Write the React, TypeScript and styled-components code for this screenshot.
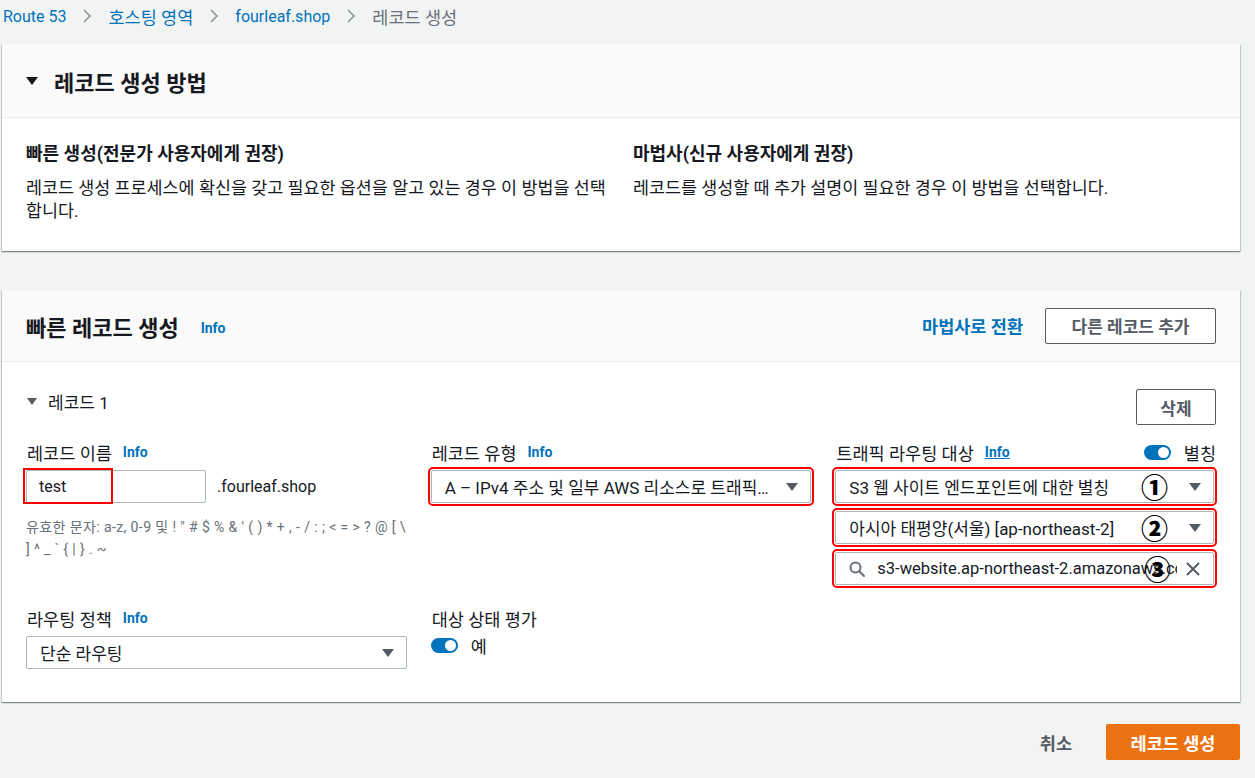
import styled, { createGlobalStyle } from "styled-components";

const GlobalStyle = createGlobalStyle`
  * { box-sizing: border-box; }
  html, body { margin: 0; padding: 0; }
  body {
    background: #f2f3f3;
    font-family: Roboto, "Noto Sans CJK KR", sans-serif;
    color: #16191f;
    font-size: 17px;
  }
`;

const Page = styled.div`
  width: 1255px;
  height: 778px;
  overflow: hidden;
  padding: 0 15px 0 2px;
`;

const Breadcrumbs = styled.nav`
  display: flex;
  align-items: center;
  height: 28px;
  padding-top: 4px;
  margin-bottom: 16px;
  margin-left: 1px;
`;

const Crumb = styled.span<{ $current?: boolean; $latin?: boolean }>`
  font-size: ${({ $latin }) => ($latin ? "16px" : "17.5px")};
  color: ${({ $current }) => ($current ? "#687078" : "#0073bb")};
`;

const CrumbSep = styled.span`
  display: flex;
  align-items: center;
  margin: 0 16px;
`;

const Panel = styled.section`
  background: #ffffff;
  box-shadow: 0 1px 1px 0 rgba(0, 28, 36, 0.3), 1px 1px 1px 0 rgba(0, 28, 36, 0.15),
    -1px 1px 1px 0 rgba(0, 28, 36, 0.15);
  margin-bottom: 39px;
`;

const PanelHeader = styled.header<{ $height: number }>`
  display: flex;
  align-items: center;
  justify-content: space-between;
  height: ${({ $height }) => $height}px;
  padding: 0 24px;
  background: #fafafa;
  border-bottom: 1px solid #eaeded;
`;

const HeaderTitle = styled.h2`
  display: flex;
  align-items: center;
  margin: 0;
  font-size: 22px;
  font-weight: 700;
  color: #16191f;
`;

const Caret = styled.span<{ $size: number; $color?: string }>`
  display: inline-block;
  flex: none;
  width: 0;
  height: 0;
  border-left: ${({ $size }) => $size / 2}px solid transparent;
  border-right: ${({ $size }) => $size / 2}px solid transparent;
  border-top: ${({ $size }) => $size * 0.7}px solid ${({ $color }) => $color || "#16191f"};
`;

const TitleCaret = styled(Caret)`
  margin-right: 16px;
`;

const InfoLink = styled.a<{ $underline?: boolean }>`
  font-family: Roboto, sans-serif;
  font-size: 14px;
  font-weight: 700;
  color: #0073bb;
  margin-left: 11px;
  text-decoration: ${({ $underline }) => ($underline ? "underline" : "none")};
`;

const HeaderInfo = styled(InfoLink)`
  margin-left: 22px;
  margin-top: 5px;
`;

const MethodBody = styled.div`
  display: grid;
  grid-template-columns: minmax(0, 1fr) minmax(0, 1fr);
  column-gap: 24px;
  padding: 26px 24px 28px;
`;

const MethodTitle = styled.div`
  font-size: 18px;
  font-weight: 700;
  line-height: 20px;
`;

const MethodDesc = styled.div`
  margin-top: 13px;
  font-size: 17.4px;
  line-height: 23px;
  color: #16191f;
`;

const HeaderActions = styled.div`
  display: flex;
  align-items: center;
  gap: 22px;
`;

const LinkAction = styled.a`
  font-size: 17.5px;
  font-weight: 700;
  color: #0073bb;
`;

const NormalButton = styled.button<{ $width: number }>`
  height: 36px;
  width: ${({ $width }) => $width}px;
  border: 1px solid #545b64;
  border-radius: 2px;
  background: #ffffff;
  color: #545b64;
  font-family: inherit;
  font-size: 17px;
  font-weight: 700;
`;

const RecordBody = styled.div`
  padding: 27px 24px 33px;
`;

const RecordHead = styled.div`
  display: flex;
  align-items: center;
  justify-content: space-between;
  height: 36px;
`;

const RecordTitle = styled.div`
  display: flex;
  align-items: center;
  gap: 11px;
  margin-top: -12px;
  font-size: 17px;
  color: #16191f;
  padding-left: 1px;
`;

const Fields = styled.div`
  display: grid;
  grid-template-columns: repeat(3, minmax(0, 1fr));
  column-gap: 24px;
  row-gap: 23px;
  margin-top: 17px;
`;

const Field = styled.div`
  display: flex;
  flex-direction: column;
  min-width: 0;
`;

const LabelRow = styled.div`
  display: flex;
  align-items: center;
  justify-content: space-between;
  height: 20px;
  margin-bottom: 8px;
`;

const Label = styled.label`
  display: flex;
  align-items: center;
  font-size: 17.5px;
  color: #16191f;
  padding-left: 1px;
`;

const ToggleWrap = styled.div<{ $lift?: number }>`
  display: flex;
  align-items: center;
  gap: 13px;
  font-size: 17.5px;
  margin-top: ${({ $lift }) => ($lift ? -$lift : 0)}px;
`;

const Toggle = styled.span`
  position: relative;
  display: inline-block;
  width: 27px;
  height: 15px;
  border-radius: 8px;
  background: #0073bb;

  &::after {
    content: "";
    position: absolute;
    top: 2px;
    right: 2px;
    width: 11px;
    height: 11px;
    border-radius: 50%;
    background: #ffffff;
  }
`;

const NameRow = styled.div`
  display: flex;
  align-items: center;
  gap: 11px;
`;

const Annotated = styled.div`
  position: relative;
`;

const TextInput = styled.div<{ $width?: number }>`
  display: flex;
  align-items: center;
  height: 33px;
  width: ${({ $width }) => ($width ? `${$width}px` : "100%")};
  padding: 0 12px;
  border: 1px solid #aab7b8;
  border-radius: 2px;
  background: #ffffff;
  font-size: 16px;
  color: #16191f;
`;

const Suffix = styled.span`
  font-size: 16px;
  color: #16191f;
`;

const RedBox = styled.span`
  position: absolute;
  left: -3px;
  top: -2px;
  width: 90px;
  height: 36px;
  border: 2px solid #ff0000;
  pointer-events: none;
`;

const Hint = styled.div`
  margin-top: 13px;
  font-size: 14px;
  letter-spacing: 0.4px;
  line-height: 22px;
  color: #687078;
`;

const Select = styled.div<{ $marked?: boolean }>`
  position: relative;
  display: flex;
  align-items: center;
  height: 33px;
  padding: 0 12px 0 13px;
  border: 1px solid #aab7b8;
  border-radius: 2px;
  background: #ffffff;
  font-size: 17px;
  color: #16191f;
  outline: ${({ $marked }) => ($marked ? "2px solid #ff0000" : "none")};
  outline-offset: 1px;
`;

const SelectText = styled.span`
  flex: 1;
  min-width: 0;
  white-space: nowrap;
  overflow: hidden;
  text-overflow: ellipsis;
  padding-right: 14px;
`;

const TargetStack = styled.div`
  display: flex;
  flex-direction: column;
  gap: 8px;
  margin-right: 2px;
`;

const Marker = styled.span<{ $right: number }>`
  position: absolute;
  top: 50%;
  right: ${({ $right }) => $right}px;
  transform: translateY(-52%);
  font-family: "Noto Sans CJK KR", sans-serif;
  font-size: 27px;
  font-weight: 900;
  line-height: 1;
  color: #000000;
  pointer-events: none;
`;

const SearchIcon = styled.svg`
  flex: none;
  margin-right: 12px;
`;

const ClearIcon = styled.svg`
  flex: none;
  margin-left: 8px;
`;

const SearchText = styled.span`
  flex: 1;
  min-width: 0;
  white-space: nowrap;
  overflow: hidden;
  font-size: 16.5px;
`;

const Footer = styled.div`
  display: flex;
  align-items: center;
  justify-content: flex-end;
  gap: 34px;
  margin-top: -17px;
`;

const CancelLink = styled.span`
  font-size: 17.5px;
  font-weight: 700;
  color: #545b64;
`;

const PrimaryButton = styled.button`
  height: 36px;
  width: 134px;
  border: none;
  border-radius: 2px;
  background: #ec7211;
  color: #ffffff;
  font-family: inherit;
  font-size: 17.5px;
  font-weight: 700;
`;

function Chevron() {
  return (
    <svg width="10" height="16" viewBox="0 0 10 16">
      <path d="M2 2l6 6-6 6" fill="none" stroke="#879596" strokeWidth="1.6" />
    </svg>
  );
}

function DropCaret() {
  return <Caret $size={12} $color="#545b64" />;
}

export default function App() {
  return (
    <>
      <GlobalStyle />
      <Page>
        <Breadcrumbs>
          <Crumb $latin>Route 53</Crumb>
          <CrumbSep>
            <Chevron />
          </CrumbSep>
          <Crumb>호스팅 영역</Crumb>
          <CrumbSep>
            <Chevron />
          </CrumbSep>
          <Crumb $latin>fourleaf.shop</Crumb>
          <CrumbSep>
            <Chevron />
          </CrumbSep>
          <Crumb $current>레코드 생성</Crumb>
        </Breadcrumbs>

        <Panel>
          <PanelHeader $height={74}>
            <HeaderTitle>
              <TitleCaret $size={12} />
              레코드 생성 방법
            </HeaderTitle>
          </PanelHeader>
          <MethodBody>
            <div>
              <MethodTitle>빠른 생성(전문가 사용자에게 권장)</MethodTitle>
              <MethodDesc>
                레코드 생성 프로세스에 확신을 갖고 필요한 옵션을 알고 있는 경우 이 방법을 선택합니다.
              </MethodDesc>
            </div>
            <div>
              <MethodTitle>마법사(신규 사용자에게 권장)</MethodTitle>
              <MethodDesc>레코드를 생성할 때 추가 설명이 필요한 경우 이 방법을 선택합니다.</MethodDesc>
            </div>
          </MethodBody>
        </Panel>

        <Panel>
          <PanelHeader $height={72}>
            <HeaderTitle>
              빠른 레코드 생성
              <HeaderInfo>Info</HeaderInfo>
            </HeaderTitle>
            <HeaderActions>
              <LinkAction>마법사로 전환</LinkAction>
              <NormalButton $width={171}>다른 레코드 추가</NormalButton>
            </HeaderActions>
          </PanelHeader>
          <RecordBody>
            <RecordHead>
              <RecordTitle>
                <Caret $size={10} $color="#545b64" />
                레코드 1
              </RecordTitle>
              <NormalButton $width={80}>삭제</NormalButton>
            </RecordHead>

            <Fields>
              <Field>
                <LabelRow>
                  <Label>
                    레코드 이름<InfoLink>Info</InfoLink>
                  </Label>
                </LabelRow>
                <NameRow>
                  <Annotated>
                    <TextInput $width={180}>test</TextInput>
                    <RedBox />
                  </Annotated>
                  <Suffix>.fourleaf.shop</Suffix>
                </NameRow>
                <Hint>
                  유효한 문자: a-z, 0-9 및 ! " # $ % &amp; ' ( ) * + , - / : ; &lt; = &gt; ? @ [ \ ] ^ _ ` {"{"} | {"}"} . ~
                </Hint>
              </Field>

              <Field>
                <LabelRow>
                  <Label>
                    레코드 유형<InfoLink>Info</InfoLink>
                  </Label>
                </LabelRow>
                <Select $marked>
                  <SelectText>A – IPv4 주소 및 일부 AWS 리소스로 트래픽 라우팅</SelectText>
                  <DropCaret />
                </Select>
              </Field>

              <Field>
                <LabelRow>
                  <Label>
                    트래픽 라우팅 대상<InfoLink $underline>Info</InfoLink>
                  </Label>
                  <ToggleWrap>
                    <Toggle />
                    별칭
                  </ToggleWrap>
                </LabelRow>
                <TargetStack>
                  <Select $marked>
                    <SelectText>S3 웹 사이트 엔드포인트에 대한 별칭</SelectText>
                    <DropCaret />
                    <Marker $right={45}>①</Marker>
                  </Select>
                  <Select $marked>
                    <SelectText>아시아 태평양(서울) [ap-northeast-2]</SelectText>
                    <DropCaret />
                    <Marker $right={45}>②</Marker>
                  </Select>
                  <Select $marked>
                    <SearchIcon width="16" height="16" viewBox="0 0 16 16">
                      <circle cx="6.5" cy="6.5" r="5" fill="none" stroke="#687078" strokeWidth="2" />
                      <path d="M10.2 10.2L15 15" stroke="#687078" strokeWidth="2" strokeLinecap="round" />
                    </SearchIcon>
                    <SearchText>s3-website.ap-northeast-2.amazonaws.com</SearchText>
                    <ClearIcon width="16" height="16" viewBox="0 0 16 16">
                      <path d="M2 2l12 12M14 2L2 14" stroke="#545b64" strokeWidth="2" />
                    </ClearIcon>
                    <Marker $right={42}>③</Marker>
                  </Select>
                </TargetStack>
              </Field>

              <Field>
                <LabelRow>
                  <Label>
                    라우팅 정책<InfoLink>Info</InfoLink>
                  </Label>
                </LabelRow>
                <Select>
                  <SelectText>단순 라우팅</SelectText>
                  <DropCaret />
                </Select>
              </Field>

              <Field>
                <LabelRow>
                  <Label>대상 상태 평가</Label>
                </LabelRow>
                <ToggleWrap $lift={3}>
                  <Toggle />
                  예
                </ToggleWrap>
              </Field>
            </Fields>
          </RecordBody>
        </Panel>

        <Footer>
          <CancelLink>취소</CancelLink>
          <PrimaryButton>레코드 생성</PrimaryButton>
        </Footer>
      </Page>
    </>
  );
}
